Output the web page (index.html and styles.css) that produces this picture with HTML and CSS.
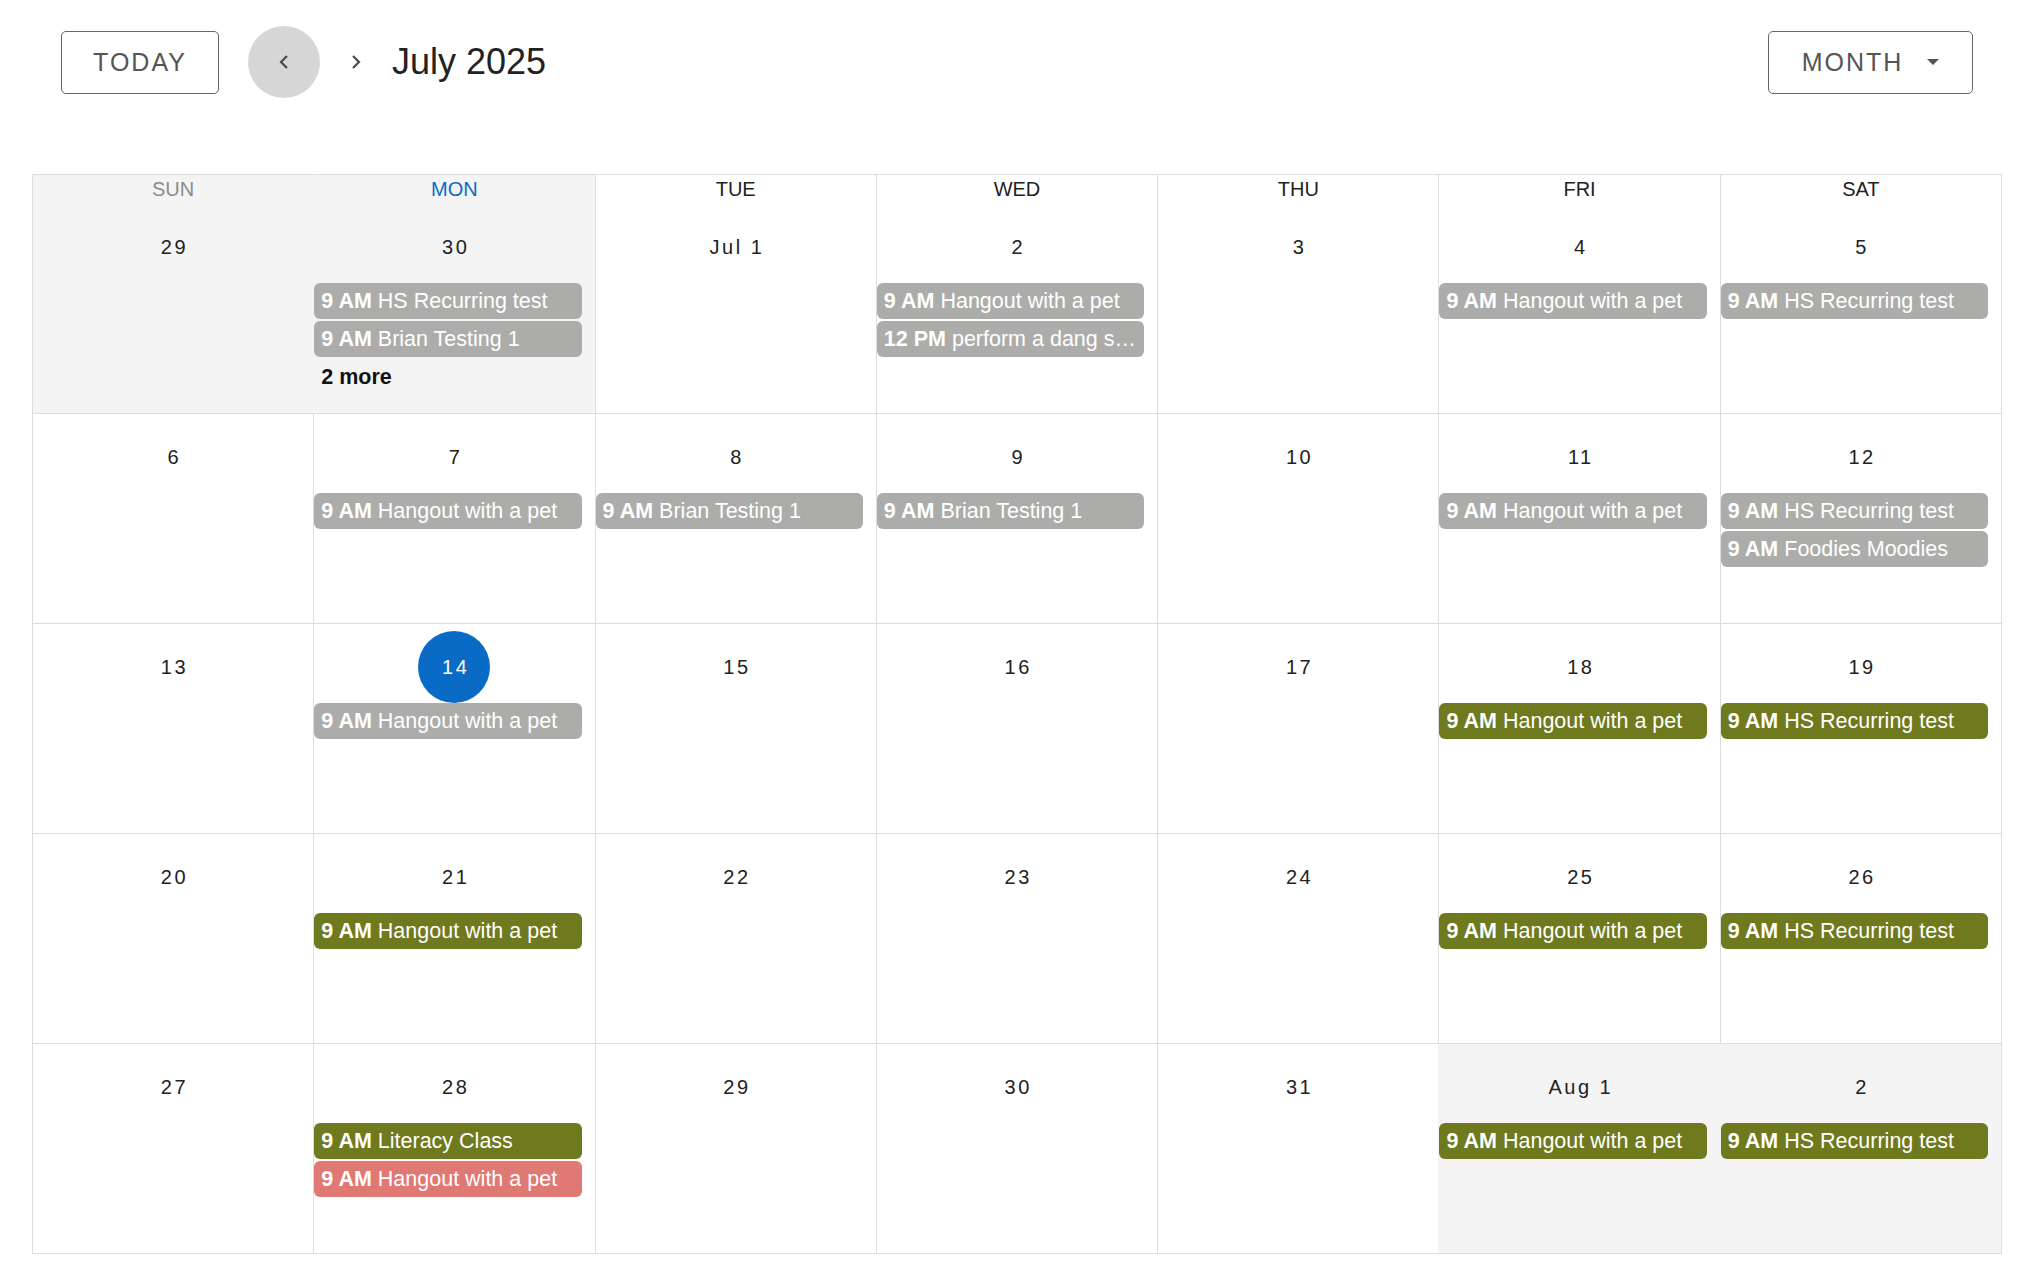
FILE: index.html
```html
<!DOCTYPE html>
<html lang="en">
  <head>
    <meta charset="UTF-8" />
    <meta name="viewport" content="width=device-width, initial-scale=1.0" />
    <title>Calendar</title>
    <link rel="stylesheet" href="styles.css">
  </head>
  <body>
    <div class="calendar">
      <div class="toolbar">
        <button class="btn-outline today-btn">TODAY</button>
        <button class="icon-btn active" aria-label="Previous month">
          <svg width="14" height="16" viewBox="0 0 14 16"><polyline points="10,2 4,8 10,14" /></svg>
        </button>
        <button class="icon-btn" aria-label="Next month">
          <svg width="14" height="16" viewBox="0 0 14 16"><polyline points="4,2 10,8 4,14" /></svg>
        </button>
        <h1 class="title">July 2025</h1>
        <button class="btn-outline view-btn">
          MONTH
          <svg width="12" height="6" viewBox="0 0 12 6"><polygon points="0,0 12,0 6,6" /></svg>
        </button>
      </div>

      <div class="month">
        <!-- week 1 -->
        <div class="cell off">
          <div class="dow sun">SUN</div>
          <div class="date"><span>29</span></div>
        </div>
        <div class="cell off">
          <div class="dow today-dow">MON</div>
          <div class="date"><span>30</span></div>
          <div class="event past"><b>9 AM</b> HS Recurring test</div>
          <div class="event past"><b>9 AM</b> Brian Testing 1</div>
          <div class="more">2 more</div>
        </div>
        <div class="cell">
          <div class="dow">TUE</div>
          <div class="date"><span>Jul 1</span></div>
        </div>
        <div class="cell">
          <div class="dow">WED</div>
          <div class="date"><span>2</span></div>
          <div class="event past"><b>9 AM</b> Hangout with a pet</div>
          <div class="event past"><b>12 PM</b> perform a dang s…</div>
        </div>
        <div class="cell">
          <div class="dow">THU</div>
          <div class="date"><span>3</span></div>
        </div>
        <div class="cell">
          <div class="dow">FRI</div>
          <div class="date"><span>4</span></div>
          <div class="event past"><b>9 AM</b> Hangout with a pet</div>
        </div>
        <div class="cell">
          <div class="dow">SAT</div>
          <div class="date"><span>5</span></div>
          <div class="event past"><b>9 AM</b> HS Recurring test</div>
        </div>

        <!-- week 2 -->
        <div class="cell"><div class="date"><span>6</span></div></div>
        <div class="cell">
          <div class="date"><span>7</span></div>
          <div class="event past"><b>9 AM</b> Hangout with a pet</div>
        </div>
        <div class="cell">
          <div class="date"><span>8</span></div>
          <div class="event past"><b>9 AM</b> Brian Testing 1</div>
        </div>
        <div class="cell">
          <div class="date"><span>9</span></div>
          <div class="event past"><b>9 AM</b> Brian Testing 1</div>
        </div>
        <div class="cell"><div class="date"><span>10</span></div></div>
        <div class="cell">
          <div class="date"><span>11</span></div>
          <div class="event past"><b>9 AM</b> Hangout with a pet</div>
        </div>
        <div class="cell">
          <div class="date"><span>12</span></div>
          <div class="event past"><b>9 AM</b> HS Recurring test</div>
          <div class="event past"><b>9 AM</b> Foodies Moodies</div>
        </div>

        <!-- week 3 -->
        <div class="cell"><div class="date"><span>13</span></div></div>
        <div class="cell">
          <div class="date is-today"><span>14</span></div>
          <div class="event past"><b>9 AM</b> Hangout with a pet</div>
        </div>
        <div class="cell"><div class="date"><span>15</span></div></div>
        <div class="cell"><div class="date"><span>16</span></div></div>
        <div class="cell"><div class="date"><span>17</span></div></div>
        <div class="cell">
          <div class="date"><span>18</span></div>
          <div class="event"><b>9 AM</b> Hangout with a pet</div>
        </div>
        <div class="cell">
          <div class="date"><span>19</span></div>
          <div class="event"><b>9 AM</b> HS Recurring test</div>
        </div>

        <!-- week 4 -->
        <div class="cell"><div class="date"><span>20</span></div></div>
        <div class="cell">
          <div class="date"><span>21</span></div>
          <div class="event"><b>9 AM</b> Hangout with a pet</div>
        </div>
        <div class="cell"><div class="date"><span>22</span></div></div>
        <div class="cell"><div class="date"><span>23</span></div></div>
        <div class="cell"><div class="date"><span>24</span></div></div>
        <div class="cell">
          <div class="date"><span>25</span></div>
          <div class="event"><b>9 AM</b> Hangout with a pet</div>
        </div>
        <div class="cell">
          <div class="date"><span>26</span></div>
          <div class="event"><b>9 AM</b> HS Recurring test</div>
        </div>

        <!-- week 5 -->
        <div class="cell"><div class="date"><span>27</span></div></div>
        <div class="cell">
          <div class="date"><span>28</span></div>
          <div class="event"><b>9 AM</b> Literacy Class</div>
          <div class="event alert"><b>9 AM</b> Hangout with a pet</div>
        </div>
        <div class="cell"><div class="date"><span>29</span></div></div>
        <div class="cell"><div class="date"><span>30</span></div></div>
        <div class="cell"><div class="date"><span>31</span></div></div>
        <div class="cell off">
          <div class="date"><span>Aug 1</span></div>
          <div class="event"><b>9 AM</b> Hangout with a pet</div>
        </div>
        <div class="cell off">
          <div class="date"><span>2</span></div>
          <div class="event"><b>9 AM</b> HS Recurring test</div>
        </div>
      </div>
    </div>
  </body>
</html>
```

FILE: styles.css
```css
:root {
  --border-color: #dddddd;
  --off-range-color: #f4f4f4;
  --text-color: #222222;
  --muted-color: #555555;
  --primary-color: #0a6bc7;
  --past-color: #acadaa;
  --event-color: #6f791e;
  --alert-color: #e07874;
}

body {
  margin: 0;
  padding: 26px 42px 0 32px;
  background: #ffffff;
  color: var(--text-color);
  font-family: "Liberation Sans", Arial, sans-serif;
}

/* toolbar */

.toolbar {
  display: flex;
  align-items: center;
  height: 72px;
  padding: 0 29px;
}

.btn-outline {
  display: flex;
  align-items: center;
  justify-content: center;
  height: 63px;
  background: #ffffff;
  border: 1px solid #666666;
  border-radius: 5px;
  color: var(--muted-color);
  font-family: inherit;
  font-size: 25px;
  letter-spacing: 2px;
  cursor: pointer;
}

.today-btn {
  width: 158px;
  margin-right: 29px;
}

.view-btn {
  width: 205px;
  margin-left: auto;
  gap: 24px;
  padding-left: 6px;
}

.view-btn svg {
  fill: var(--muted-color);
}

.icon-btn {
  display: flex;
  align-items: center;
  justify-content: center;
  width: 72px;
  height: 72px;
  padding: 0;
  border: none;
  border-radius: 50%;
  background: transparent;
  cursor: pointer;
}

.icon-btn.active {
  background: #d6d6d6;
}

.icon-btn svg polyline {
  fill: none;
  stroke: #4a4a4a;
  stroke-width: 2.2;
}

.title {
  margin: 0;
  font-size: 36px;
  font-weight: 400;
  color: var(--text-color);
}

/* month grid */

.month {
  display: grid;
  grid-template-columns: repeat(7, 1fr);
  grid-template-rows: 239px repeat(4, 210px);
  margin-top: 76px;
  border-right: 1px solid var(--border-color);
  border-bottom: 1px solid var(--border-color);
}

.cell {
  min-width: 0;
  border-left: 1px solid var(--border-color);
  border-top: 1px solid var(--border-color);
}

.cell.off {
  background: var(--off-range-color);
  border-left-color: transparent;
}

.cell:nth-child(7n + 1) {
  border-left-color: var(--border-color);
}

.dow {
  height: 29px;
  line-height: 29px;
  text-align: center;
  font-size: 20px;
  color: var(--text-color);
}

.dow.sun {
  color: #8c8c8c;
}

.dow.today-dow {
  color: var(--primary-color);
}

.date {
  display: flex;
  justify-content: center;
  margin-top: 7px;
}

.date span {
  display: flex;
  align-items: center;
  justify-content: center;
  min-width: 72px;
  height: 72px;
  border-radius: 36px;
  font-size: 20px;
  letter-spacing: 2.5px;
  text-indent: 2.5px;
  color: var(--text-color);
}

.date.is-today span {
  background: var(--primary-color);
  color: #ffffff;
}

.event {
  width: calc(100% - 13px);
  height: 36px;
  margin: 0 0 2px 0;
  padding: 0 7px;
  box-sizing: border-box;
  border-radius: 6px;
  background: var(--event-color);
  color: #ffffff;
  font-size: 21.5px;
  line-height: 36px;
  white-space: nowrap;
  overflow: hidden;
  text-overflow: ellipsis;
}

.event.past {
  background: var(--past-color);
}

.event.alert {
  background: var(--alert-color);
}

.more {
  padding-left: 7px;
  line-height: 36px;
  font-size: 21.5px;
  font-weight: 700;
  color: #111111;
}
```
